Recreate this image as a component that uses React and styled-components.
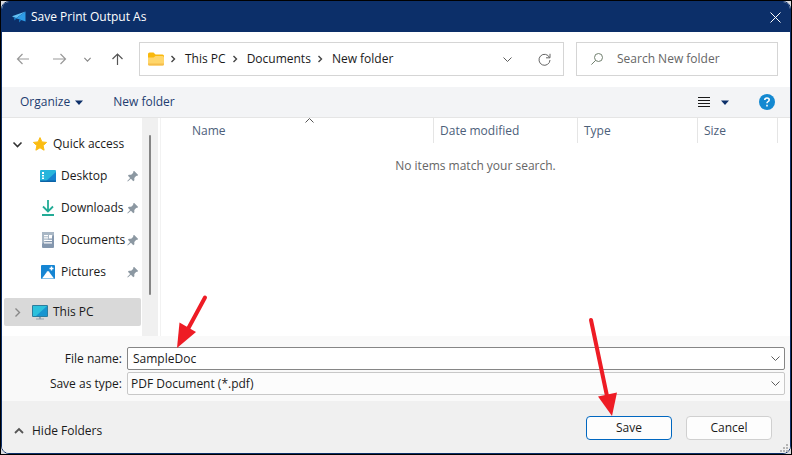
import React, { useState } from 'react';
import styled, { createGlobalStyle } from 'styled-components';

const GlobalStyle = createGlobalStyle`
  * {
    box-sizing: border-box;
  }
  body {
    margin: 0;
  }
  body, button, input, select, table {
    font-family: "Open Sans", "Noto Sans", sans-serif;
    font-size: 12px;
    line-height: 16px;
    color: #1a1a1a;
  }
`;

const Desktop = styled.div`
  min-height: 100vh;
  display: flex;
  border: 1px solid #000;
  background: #d9dbe0;
`;

const Dialog = styled.form`
  flex: 1;
  min-width: 0;
  display: flex;
  flex-direction: column;
  border: 1px solid #0c2f69;
  border-radius: 8px;
  overflow: hidden;
  background: #fff;
`;

const TitleBar = styled.header`
  display: flex;
  align-items: center;
  gap: 5px;
  height: 30px;
  padding: 0 9px 0 10px;
  background: #0c2f69;
`;

const Title = styled.h1`
  flex: 1;
  margin: 0;
  font-size: 12px;
  font-weight: 400;
  color: #fff;
`;

const Icon = styled.svg`
  display: block;
  flex: none;
  overflow: visible;
  fill: none;
  stroke: ${({ $color }) => $color || '#5c5c5c'};
  stroke-width: ${({ $weight }) => $weight || 1};
`;

const PlainButton = styled.button`
  display: flex;
  align-items: center;
  justify-content: center;
  flex: none;
  gap: 5px;
  padding: 0;
  border: 0;
  background: transparent;
  color: ${({ $color }) => $color || '#1a1a1a'};
  white-space: nowrap;
  cursor: pointer;
`;

const NavBar = styled.nav`
  display: flex;
  align-items: center;
  gap: 12px;
  padding: 10px 12px 11px 14px;
`;

const NavButtons = styled.div`
  display: flex;
  align-items: center;
  gap: 18px;
  width: 111px;
`;

const AddressBar = styled.div`
  flex: 1;
  display: flex;
  align-items: center;
  height: 34px;
  padding: 0 12px 0 8px;
  border: 1px solid #d5d5d5;
`;

const Crumbs = styled.ol`
  flex: 1;
  display: flex;
  align-items: center;
  margin: 0;
  padding: 0;
  list-style: none;
`;

const Crumb = styled.li`
  display: flex;
  align-items: center;
  gap: 10px;
  padding-left: 7px;
`;

const CrumbLink = styled.a`
  color: #1a1a1a;
  text-decoration: none;
  white-space: nowrap;
`;

const AddressTools = styled.div`
  display: flex;
  align-items: center;
  gap: 26px;
`;

const SearchBox = styled.label`
  display: flex;
  align-items: center;
  gap: 14px;
  width: 202px;
  height: 34px;
  padding: 0 14px;
  border: 1px solid #d5d5d5;
`;

const SearchInput = styled.input`
  flex: 1;
  min-width: 0;
  padding: 0;
  border: 0;
  outline: 0;
  background: transparent;
  &::placeholder {
    color: #666;
    opacity: 1;
  }
`;

const ToolBar = styled.div`
  display: flex;
  align-items: center;
  gap: 30px;
  height: 31px;
  padding: 0 15px 0 18px;
  border-bottom: 1px solid #e5e5e5;
  background: #f3f4f6;
`;

const ToolEnd = styled.div`
  display: flex;
  align-items: center;
  gap: 30px;
  margin-left: auto;
`;

const Main = styled.main`
  flex: 1;
  display: flex;
`;

const Sidebar = styled.aside`
  display: flex;
  width: 159px;
  border-right: 1px solid #f2f2f2;
`;

const Tree = styled.ul`
  flex: 1;
  min-width: 0;
  margin: 0;
  padding: 10px 1px 10px 2px;
  list-style: none;
`;

const TreeItem = styled.li`
  display: flex;
  align-items: center;
  gap: 5px;
  height: ${({ $selected }) => ($selected ? 28 : 32)}px;
  margin-top: ${({ $selected }) => ($selected ? 10 : 0)}px;
  padding: 0 2px 0 ${({ $child }) => ($child ? 36 : 8)}px;
  border-radius: 2px;
  background: ${({ $selected }) => ($selected ? '#d9d9d9' : 'transparent')};
`;

const Expander = styled(PlainButton)`
  width: 10px;
  height: 16px;
  margin-right: 5px;
`;

const TreeLabel = styled.span`
  flex: 1;
  min-width: 0;
  white-space: nowrap;
`;

const ScrollTrack = styled.div`
  flex: none;
  display: flex;
  justify-content: center;
  width: 16px;
  margin-right: 2px;
  padding: 17px 0 41px;
  background: #f0f0f0;
`;

const ScrollThumb = styled.div`
  width: 2px;
  border-radius: 1px;
  background: #858585;
`;

const Files = styled.section`
  flex: 1;
  min-width: 0;
  padding-right: 12px;
`;

const FileTable = styled.table`
  width: 100%;
  table-layout: fixed;
  border-collapse: separate;
  border-spacing: 0;
`;

const HeadCell = styled.th`
  position: relative;
  width: ${({ $width }) => $width || 'auto'};
  height: 25px;
  padding: 0 0 0 ${({ $first }) => ($first ? 31 : 6)}px;
  border-right: 1px solid #e5e5e5;
  color: #4c607a;
  font-weight: 400;
  text-align: left;
`;

const SortMark = styled.span`
  position: absolute;
  top: 0;
  left: 50%;
  padding-left: 8px;
`;

const EmptyCell = styled.td`
  padding: 15px 0 0 12px;
  color: #666;
  text-align: center;
`;

const Fields = styled.div`
  display: grid;
  grid-template-columns: 120px 1fr;
  align-items: center;
  gap: 2px 5px;
  padding: 11px 5px 6px 0;
  background: #f9f9f9;
`;

const FieldLabel = styled.label`
  text-align: right;
  white-space: nowrap;
`;

const Combo = styled.div`
  position: relative;
  display: flex;
  align-items: center;
  height: 23px;
  padding-right: 4px;
  border: 1px solid ${({ $strong }) => ($strong ? '#868686' : '#c8c8c8')};
  border-radius: 2px;
  background: ${({ $strong }) => ($strong ? '#fff' : '#fcfcfc')};
`;

const NameInput = styled.input`
  flex: 1;
  min-width: 0;
  padding: 0 5px;
  border: 0;
  outline: 0;
  background: transparent;
`;

const TypeSelect = styled.select`
  flex: 1;
  min-width: 0;
  padding: 0 3px;
  border: 0;
  outline: 0;
  appearance: none;
  background: transparent;
`;

const Footer = styled.footer`
  display: flex;
  align-items: center;
  gap: 14px;
  height: 52px;
  padding: 2px 18px 0 12px;
  background: #f0f0f0;
`;

const FolderToggle = styled(PlainButton)`
  gap: 8px;
  margin-right: auto;
  padding-top: 6px;
`;

const ButtonSlot = styled.div`
  position: relative;
  display: flex;
`;

const ActionButton = styled.button`
  width: 86px;
  height: 24px;
  padding: 0;
  border: 1px solid ${({ $primary }) => ($primary ? '#0067c0' : '#d0d0d0')};
  border-radius: 4px;
  background: #fdfdfd;
  cursor: pointer;
`;

const Pointer = styled.svg`
  position: absolute;
  left: ${({ $left }) => $left}px;
  bottom: 100%;
  overflow: visible;
  pointer-events: none;
  fill: #ee1c25;
  stroke: #ee1c25;
`;

const Grip = styled.svg`
  position: fixed;
  right: 4px;
  bottom: 3px;
  fill: #b5b5b5;
`;

const ChevronRight = () => (
  <Icon width="4" height="8" viewBox="0 0 4 8" $color="#444" $weight={1.4}>
    <path d="M.5 1 3.5 4l-3 3" />
  </Icon>
);

const ChevronDown = ({ size = 9, color, weight }) => (
  <Icon width={size} height={size} viewBox="0 0 9 9" $color={color} $weight={weight}>
    <path d="m.5 2.5 4 4 4-4" />
  </Icon>
);

const Triangle = () => (
  <Icon width="8" height="5" viewBox="0 0 8 5" $color="none">
    <path d="M0 .5h8L4 5z" fill="#0c2f69" />
  </Icon>
);

const AppLogo = () => (
  <Icon width="14" height="12" viewBox="0 0 14 12" $color="none">
    <path d="M13.500.5 0 5.200l4 2z" fill="#63c1f5" />
    <path d="M13.500.5 4 7.200l9.500 3.300z" fill="#2e9be6" />
    <path d="m1.500 6 1 3.500L5 7.200zM7 8.500v3L9.500 9z" fill="#1673bd" />
  </Icon>
);

const FolderIcon = () => (
  <Icon width="16" height="14" viewBox="0 0 16 14" $color="none">
    <path d="M0 2Q0 .5 1.500.5h4L7.500 2.500H14.500Q16 2.500 16 4V6H0z" fill="#f9b80c" />
    <path d="M0 5.500h5.500L7.500 4H14.500Q16 4 16 5.500V12q0 1.500-1.500 1.500h-13Q0 13.500 0 12z" fill="#ffd66b" />
    <path d="M0 11.500V12q0 1.500 1.500 1.500h13q1.500 0 1.500-1.500v-.500z" fill="#f5bd4c" />
  </Icon>
);

const StarIcon = () => (
  <Icon width="16" height="16" viewBox="0 0 16 16" $color="#fbbc11" $weight={1}>
    <path d="m8 1.600 1.900 4.300 4.700.5-3.500 3.200 1 4.600L8 11.800l-4.100 2.400 1-4.600L1.400 6.400l4.700-.5z" fill="#fbbc11" strokeLinejoin="round" />
  </Icon>
);

const DesktopIcon = () => (
  <Icon width="16" height="16" viewBox="0 0 16 16" $color="none">
    <rect y="2" width="16" height="12" rx="1" fill="#27b5dc" />
    <path d="M16 4v9q0 1-1 1H5z" fill="#1582cf" />
    <path d="M2 4h2v2H2zM2 7h2v1.500H2zM2 9.500h2V11H2z" fill="#fff" />
    <path d="M0 12.500h16V13q0 1-1 1H1q-1 0-1-1z" fill="#0b62a5" />
  </Icon>
);

const DownloadIcon = () => (
  <Icon width="16" height="16" viewBox="0 0 16 16" $color="#23ab96" $weight={1.8}>
    <path d="M8 0v11M3 6.500l5 5 5-5M2 15h12" />
  </Icon>
);

const DocumentIcon = () => (
  <Icon width="16" height="16" viewBox="0 0 16 16" $color="none">
    <rect x="2" y="0" width="12" height="16" rx="1" fill="#8497ae" />
    <path d="M2 1q0-1 1-1h10q1 0 1 1v2L2 12z" fill="#a9b7c5" />
    <path d="M4 3h4v1.200H4zM4 5.300h4v1.200H4zM9 3h3v3.500H9zM4 7.800h8V9H4zM4 10.300h8v1.200H4z" fill="#fff" />
  </Icon>
);

const PictureIcon = () => (
  <Icon width="16" height="16" viewBox="0 0 16 16" $color="none">
    <rect x="1" y="1" width="14" height="14" rx="1" fill="#1585d3" />
    <path d="m2 14.500 5.200-7q.8-.9 1.600 0l5.200 7z" fill="#fff" />
    <path d="M11.500 2.500v4M9.500 4.500h4" stroke="#fff" strokeWidth="1.400" />
  </Icon>
);

const MonitorIcon = () => (
  <Icon width="16" height="16" viewBox="0 0 16 16" $color="none">
    <rect y="1" width="16" height="12" rx="1" fill="#2c7d9e" />
    <path d="M1 2h14v10H1z" fill="#2cc1dc" />
    <path d="M15 2v10H4z" fill="#1795d0" />
    <path d="M7 13h2v1.500h3v1H4v-1h3z" fill="#94a3ae" />
  </Icon>
);

const PinIcon = () => (
  <Icon width="12" height="12" viewBox="0 0 12 12" $color="none">
    <path d="M7 .8 11.200 5 10 6 9.300 5.800 7.300 7.900 7.400 10.200 6.300 11.200 3.900 8.800.8 11.600.3 11.100 3.100 8 .9 5.700 1.900 4.700 4.200 4.700 6.300 2.700 6 1.900z" fill="#8c98a2" />
  </Icon>
);

const places = [
  { name: 'Desktop', icon: <DesktopIcon /> },
  { name: 'Downloads', icon: <DownloadIcon /> },
  { name: 'Documents', icon: <DocumentIcon /> },
  { name: 'Pictures', icon: <PictureIcon /> },
];

const crumbs = ['This PC', 'Documents', 'New folder'];

const App = () => {
  const [fileName, setFileName] = useState('SampleDoc');

  return (
    <Desktop>
      <GlobalStyle />
      <Dialog onSubmit={(e) => e.preventDefault()}>
        <TitleBar>
          <AppLogo />
          <Title>Save Print Output As</Title>
          <PlainButton type="button" aria-label="Close">
            <Icon width="11" height="11" viewBox="0 0 11 11" $color="#fff">
              <path d="m.5.5 10 10M10.500.5l-10 10" />
            </Icon>
          </PlainButton>
        </TitleBar>

        <NavBar>
          <NavButtons>
            <PlainButton type="button" aria-label="Back">
              <Icon width="14" height="12" viewBox="0 0 14 12" $color="#999" $weight={1.2}>
                <path d="M13 6H1.500M6.500 1l-5 5 5 5" />
              </Icon>
            </PlainButton>
            <PlainButton type="button" aria-label="Forward">
              <Icon width="18" height="12" viewBox="0 0 18 12" $color="#999" $weight={1.2}>
                <path d="M5 6h12.500M12.500 1l5 5-5 5" />
              </Icon>
            </PlainButton>
            <PlainButton type="button" aria-label="Recent locations">
              <ChevronDown size={7} color="#888" weight={1.5} />
            </PlainButton>
            <PlainButton type="button" aria-label="Up">
              <Icon width="14" height="12" viewBox="0 0 14 12" $color="#555" $weight={1.2}>
                <path d="M8.500 12V1M3.500 6l5-5 5 5" />
              </Icon>
            </PlainButton>
          </NavButtons>
          <AddressBar>
            <FolderIcon />
            <Crumbs>
              {crumbs.map((name) => (
                <Crumb key={name}>
                  <ChevronRight />
                  <CrumbLink href="#">{name}</CrumbLink>
                </Crumb>
              ))}
            </Crumbs>
            <AddressTools>
              <PlainButton type="button" aria-label="Previous locations">
                <ChevronDown />
              </PlainButton>
              <PlainButton type="button" aria-label="Refresh">
                <Icon width="13" height="13" viewBox="0 0 13 13" $color="#666">
                  <path d="M11.500 4.500A5.500 5.500 0 1 0 12 7M12 .8v4H8" />
                </Icon>
              </PlainButton>
            </AddressTools>
          </AddressBar>
          <SearchBox>
            <Icon width="12" height="12" viewBox="0 0 12 12" $color="#71806f">
              <circle cx="7.500" cy="4.500" r="4" />
              <path d="M4.700 7.300.4 11.600" />
            </Icon>
            <SearchInput type="text" placeholder="Search New folder" aria-label="Search New folder" />
          </SearchBox>
        </NavBar>

        <ToolBar>
          <PlainButton type="button" $color="#1e3d70">
            Organize
            <Triangle />
          </PlainButton>
          <PlainButton type="button" $color="#1e3d70">New folder</PlainButton>
          <ToolEnd>
            <PlainButton type="button" aria-label="Change view">
              <Icon width="18" height="12" viewBox="0 0 18 12" $color="#1a1a1a">
                <path d="M0 1.500h12M0 4.500h12M0 7.500h12M0 10.500h12" />
              </Icon>
              <Triangle />
            </PlainButton>
            <PlainButton type="button" aria-label="Help">
              <Icon width="16" height="16" viewBox="0 0 16 16" $color="#fff" $weight={1.6}>
                <circle cx="8" cy="8" r="8" fill="#1489d1" stroke="none" />
                <path d="M5.800 6Q5.800 4 8 4t2.200 1.800Q10.200 7 9 7.600 8 8.100 8 9.200M8 10.800v1.600" />
              </Icon>
            </PlainButton>
          </ToolEnd>
        </ToolBar>

        <Main>
          <Sidebar>
            <Tree>
              <TreeItem>
                <Expander type="button" aria-label="Collapse Quick access">
                  <ChevronDown color="#333" weight={1.6} />
                </Expander>
                <StarIcon />
                <TreeLabel>Quick access</TreeLabel>
              </TreeItem>
              {places.map(({ name, icon }) => (
                <TreeItem key={name} $child>
                  {icon}
                  <TreeLabel>{name}</TreeLabel>
                  <PinIcon />
                </TreeItem>
              ))}
              <TreeItem $selected>
                <Expander type="button" aria-label="Expand This PC">
                  <Icon width="5" height="9" viewBox="0 0 5 9" $color="#888" $weight={1.4}>
                    <path d="m.5.5 4 4-4 4" />
                  </Icon>
                </Expander>
                <MonitorIcon />
                <TreeLabel>This PC</TreeLabel>
              </TreeItem>
            </Tree>
            <ScrollTrack>
              <ScrollThumb />
            </ScrollTrack>
          </Sidebar>
          <Files>
            <FileTable>
              <thead>
                <tr>
                  <HeadCell $first>
                    Name
                    <SortMark>
                      <Icon width="9" height="5" viewBox="0 0 9 5" $color="#555">
                        <path d="m.5 4.500 4-4 4 4" />
                      </Icon>
                    </SortMark>
                  </HeadCell>
                  <HeadCell $width="144px">Date modified</HeadCell>
                  <HeadCell $width="120px">Type</HeadCell>
                  <HeadCell $width="80px">Size</HeadCell>
                </tr>
              </thead>
              <tbody>
                <tr>
                  <EmptyCell colSpan={4}>No items match your search.</EmptyCell>
                </tr>
              </tbody>
            </FileTable>
          </Files>
        </Main>

        <Fields>
          <FieldLabel htmlFor="file-name">File name:</FieldLabel>
          <Combo $strong>
            <NameInput
              id="file-name"
              type="text"
              value={fileName}
              onChange={(e) => setFileName(e.target.value)}
            />
            <PlainButton type="button" aria-label="Show file names">
              <ChevronDown />
            </PlainButton>
            <Pointer $left={49} width="30" height="52" viewBox="0 0 30 52">
              <path d="M28 1.500 11.500 32" strokeWidth="4" strokeLinecap="round" />
              <path d="m0 52 2.500-25.500L19 36z" stroke="none" />
            </Pointer>
          </Combo>
          <FieldLabel htmlFor="file-type">Save as type:</FieldLabel>
          <Combo>
            <TypeSelect id="file-type">
              <option>PDF Document (*.pdf)</option>
            </TypeSelect>
            <ChevronDown />
          </Combo>
        </Fields>

        <Footer>
          <FolderToggle type="button">
            <Icon width="10" height="6" viewBox="0 0 10 6" $color="#555" $weight={1.8}>
              <path d="m1 5 4-4 4 4" />
            </Icon>
            Hide Folders
          </FolderToggle>
          <ButtonSlot>
            <ActionButton type="submit" $primary>Save</ActionButton>
            <Pointer $left={3} width="30" height="98" viewBox="0 0 30 98">
              <path d="m2 2 16 76" strokeWidth="4" strokeLinecap="round" />
              <path d="M23 98 9 78.500l19-4z" stroke="none" />
            </Pointer>
          </ButtonSlot>
          <ActionButton type="button">Cancel</ActionButton>
        </Footer>
        <Grip width="8" height="8" viewBox="0 0 8 8">
          <path d="M6 0h2v2H6zM3 3h2v2H3zM6 3h2v2H6zM0 6h2v2H0zM3 6h2v2H3zM6 6h2v2H6z" />
        </Grip>
      </Dialog>
    </Desktop>
  );
};

export default App;
